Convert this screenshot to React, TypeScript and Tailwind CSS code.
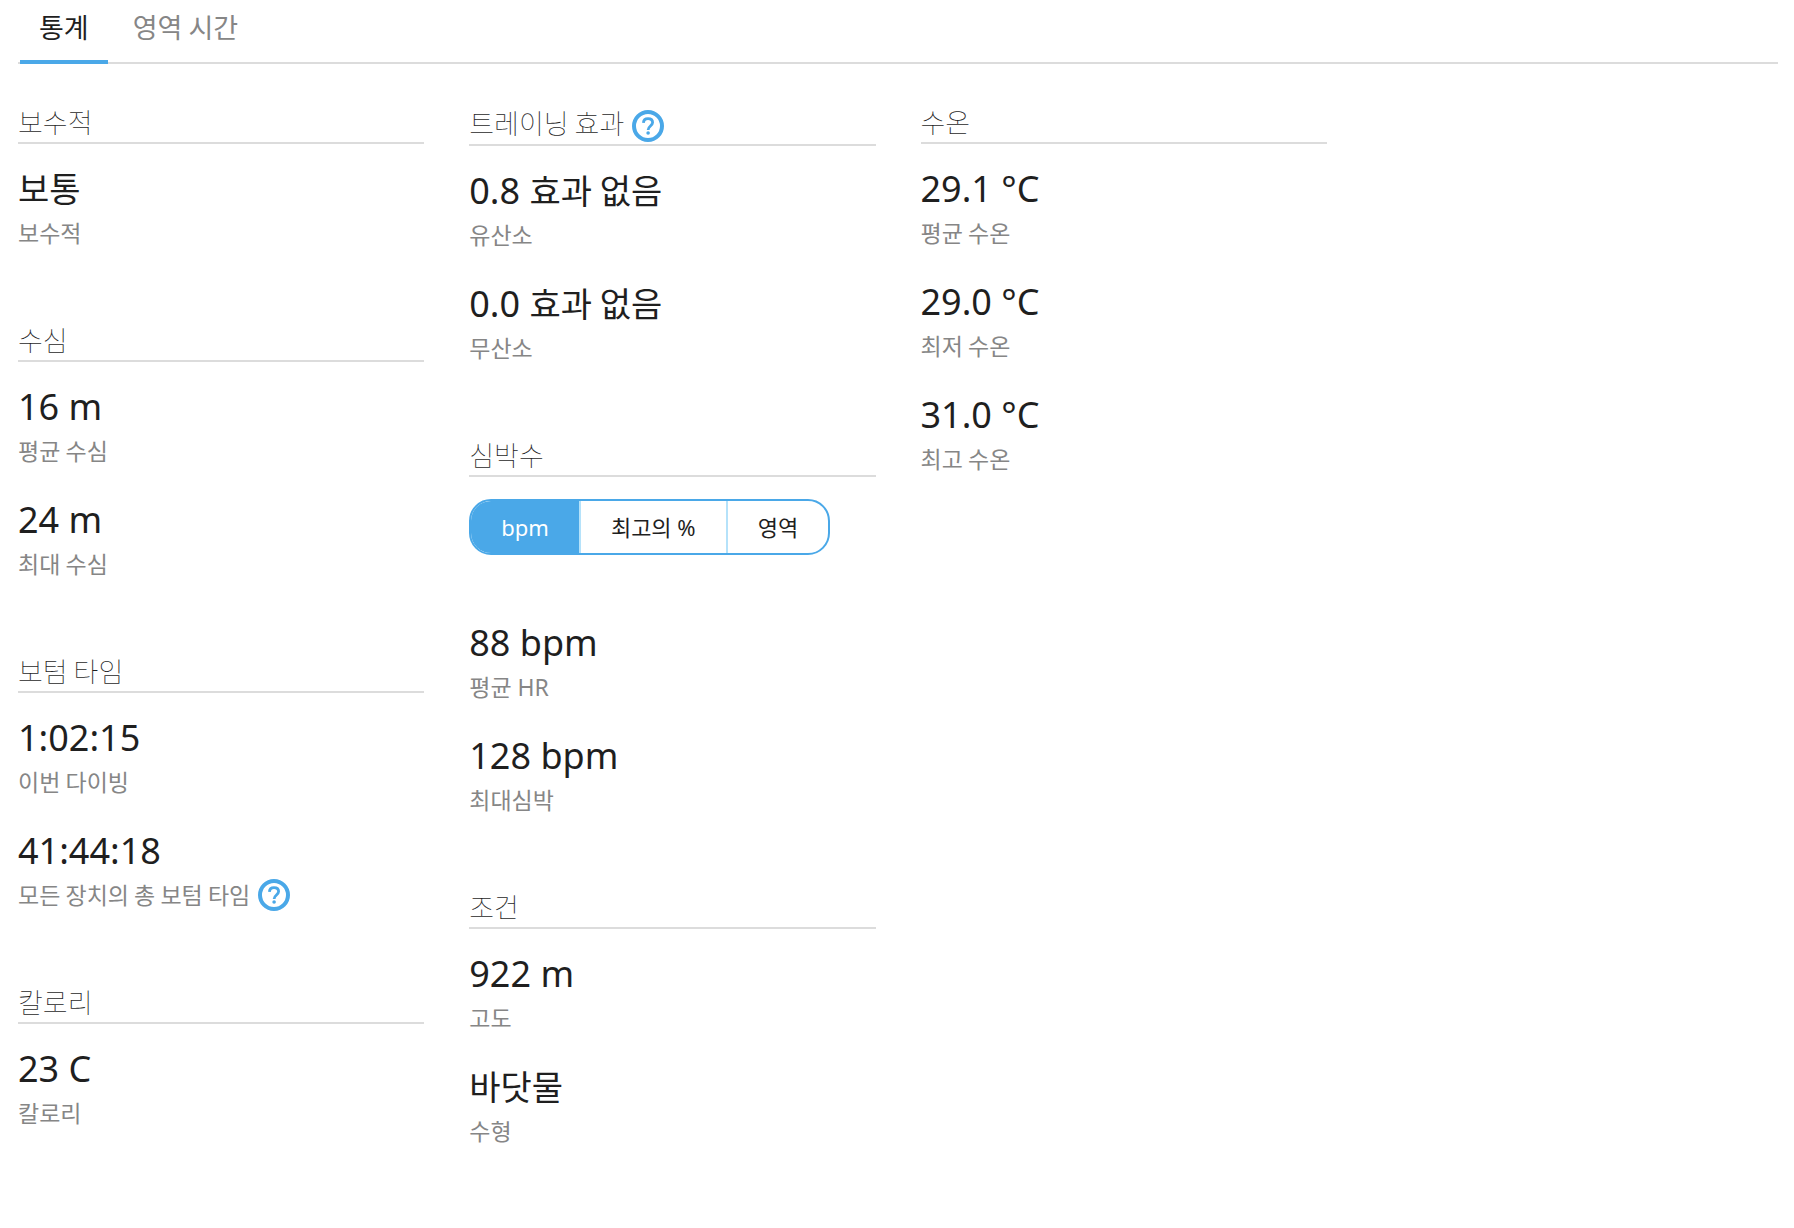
import React, { useState } from 'react';
import clsx from 'clsx';

interface Stat {
  value: string;
  label: string;
  help?: boolean;
}

interface Section {
  title: string;
  help?: boolean;
  unitToggle?: boolean;
  stats: Stat[];
}

const TABS = ['통계', '영역 시간'];
const HR_UNITS = ['bpm', '최고의 %', '영역'];

const COLUMNS: Section[][] = [
  [
    { title: '보수적', stats: [{ value: '보통', label: '보수적' }] },
    {
      title: '수심',
      stats: [
        { value: '16 m', label: '평균 수심' },
        { value: '24 m', label: '최대 수심' },
      ],
    },
    {
      title: '보텀 타임',
      stats: [
        { value: '1:02:15', label: '이번 다이빙' },
        { value: '41:44:18', label: '모든 장치의 총 보텀 타임', help: true },
      ],
    },
    { title: '칼로리', stats: [{ value: '23 C', label: '칼로리' }] },
  ],
  [
    {
      title: '트레이닝 효과',
      help: true,
      stats: [
        { value: '0.8 효과 없음', label: '유산소' },
        { value: '0.0 효과 없음', label: '무산소' },
      ],
    },
    {
      title: '심박수',
      unitToggle: true,
      stats: [
        { value: '88 bpm', label: '평균 HR' },
        { value: '128 bpm', label: '최대심박' },
      ],
    },
    {
      title: '조건',
      stats: [
        { value: '922 m', label: '고도' },
        { value: '바닷물', label: '수형' },
      ],
    },
  ],
  [
    {
      title: '수온',
      stats: [
        { value: '29.1 °C', label: '평균 수온' },
        { value: '29.0 °C', label: '최저 수온' },
        { value: '31.0 °C', label: '최고 수온' },
      ],
    },
  ],
];

// Hangul runs get the Korean face and their own size, the rest keeps the Latin one
const Mixed: React.FC<{ text: string; hangul: string }> = ({ text, hangul }) => (
  <>
    {text.split(/([가-힣]+(?: [가-힣]+)*)/).map((part, index) =>
      index % 2 === 1 ? (
        <span key={index} className={clsx("font-['Noto_Sans_CJK_KR',sans-serif] leading-none", hangul)}>
          {part}
        </span>
      ) : (
        part
      )
    )}
  </>
);

const HelpButton: React.FC = () => (
  <button type="button" aria-label="도움말" className="shrink-0 text-[#4aa8e8]">
    <svg width="32" height="32" viewBox="0 0 32 32" fill="none" stroke="currentColor">
      <circle cx="16" cy="16" r="14" strokeWidth="4" />
      <path d="M11.4 12.9c.2-2.7 2-4.2 4.6-4.2 2.7 0 4.6 1.5 4.6 3.9 0 3.2-4.5 3.7-4.5 7.3" strokeWidth="2.8" />
      <circle cx="16.1" cy="23" r="1.8" fill="currentColor" stroke="none" />
    </svg>
  </button>
);

const UnitToggle: React.FC = () => {
  const [unit, setUnit] = useState(HR_UNITS[0]);

  return (
    <div className="mt-[22px] mb-[62px] flex h-14 w-fit overflow-hidden rounded-[22px] border-2 border-[#4aa8e8] bg-white divide-x-2 divide-[#b5e2fa]">
      {HR_UNITS.map(name => (
        <button
          key={name}
          type="button"
          aria-pressed={unit === name}
          onClick={() => setUnit(name)}
          className={clsx('px-[30px] text-[22px]', unit === name && 'bg-[#4aa8e8] text-white')}
        >
          <Mixed text={name} hangul="text-[22px]" />
        </button>
      ))}
    </div>
  );
};

const StatItem: React.FC<{ stat: Stat }> = ({ stat }) => (
  <div className="pb-[25px]">
    <div className="text-4xl leading-[52px]">
      <Mixed text={stat.value} hangul="text-[34px]" />
    </div>
    <div className="flex items-center gap-2 text-[23px] leading-9 text-[#868686]">
      <span>
        <Mixed text={stat.label} hangul="text-[23px]" />
      </span>
      {stat.help && <HelpButton />}
    </div>
  </div>
);

const StatSection: React.FC<{ section: Section }> = ({ section }) => (
  <section className="pb-[46px]">
    <h2 className="flex items-center gap-2 border-b-2 border-[#dcdcdc] text-[27px] leading-[38px] font-thin">
      <span>
        <Mixed text={section.title} hangul="text-[27px]" />
      </span>
      {section.help && (
        <span className="flex h-10 items-end pb-[2px]">
          <HelpButton />
        </span>
      )}
    </h2>
    {section.unitToggle ? <UnitToggle /> : <div className="h-[19px]" />}
    {section.stats.map(stat => (
      <StatItem key={stat.label} stat={stat} />
    ))}
  </section>
);

export default function App() {
  const [tab, setTab] = useState(TABS[0]);

  return (
    <div className="min-h-screen bg-white pr-4 pl-[18px] font-['Noto_Sans','Noto_Sans_CJK_KR',sans-serif] text-[#1f1f1f]">
      <div role="tablist" className="flex gap-1.5 border-b-2 border-[#dcdcdc] px-[2px]">
        {TABS.map(name => (
          <button
            key={name}
            type="button"
            role="tab"
            aria-selected={tab === name}
            onClick={() => setTab(name)}
            className={clsx(
              '-mb-[2px] border-b-4 px-[19px] pb-1 text-[27px] leading-[56px]',
              tab === name ? 'border-[#4aa8e8]' : 'border-transparent text-[#868686]'
            )}
          >
            <Mixed text={name} hangul="text-[27px]" />
          </button>
        ))}
      </div>
      <main className="mt-10 grid grid-cols-4 gap-x-[45px]">
        {COLUMNS.map((sections, index) => (
          <div key={index}>
            {sections.map(section => (
              <StatSection key={section.title} section={section} />
            ))}
          </div>
        ))}
      </main>
    </div>
  );
}
